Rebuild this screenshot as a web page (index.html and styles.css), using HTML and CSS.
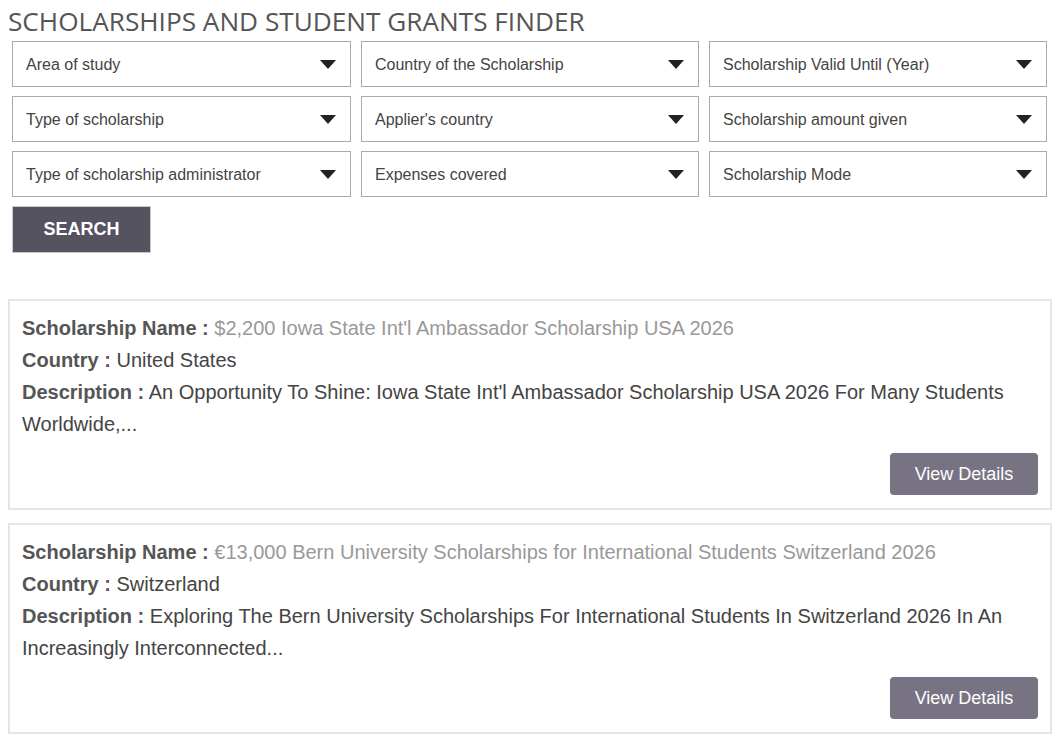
FILE: index.html
```html
<!DOCTYPE html>
<html>
<head>
<meta charset="utf-8">
<link rel="stylesheet" href="styles.css">
</head>
<body>
<h1 class="title">SCHOLARSHIPS AND STUDENT GRANTS FINDER</h1>
<div class="filters">
  <div class="select"><span>Area of study</span><i class="caret"></i></div>
  <div class="select"><span>Country of the Scholarship</span><i class="caret"></i></div>
  <div class="select"><span>Scholarship Valid Until (Year)</span><i class="caret"></i></div>
  <div class="select"><span>Type of scholarship</span><i class="caret"></i></div>
  <div class="select"><span>Applier's country</span><i class="caret"></i></div>
  <div class="select"><span>Scholarship amount given</span><i class="caret"></i></div>
  <div class="select"><span>Type of scholarship administrator</span><i class="caret"></i></div>
  <div class="select"><span>Expenses covered</span><i class="caret"></i></div>
  <div class="select"><span>Scholarship Mode</span><i class="caret"></i></div>
</div>
<button class="search">SEARCH</button>
<div class="results">
  <div class="card">
    <p><b>Scholarship Name :</b> <span class="name">$2,200 Iowa State Int'l Ambassador Scholarship USA 2026</span></p>
    <p><b>Country :</b> United States</p>
    <p><b>Description :</b> An Opportunity To Shine: Iowa State Int'l Ambassador Scholarship USA 2026 For Many Students Worldwide,...</p>
    <div class="actions"><button class="details">View Details</button></div>
  </div>
  <div class="card">
    <p><b>Scholarship Name :</b> <span class="name">€13,000 Bern University Scholarships for International Students Switzerland 2026</span></p>
    <p><b>Country :</b> Switzerland</p>
    <p><b>Description :</b> Exploring The Bern University Scholarships For International Students In Switzerland 2026 In An Increasingly Interconnected...</p>
    <div class="actions"><button class="details">View Details</button></div>
  </div>
</div>
</body>
</html>
```
FILE: styles.css
```css
body {
  margin: 0;
  padding: 0 8px;
  background: #fff;
  font-family: "Liberation Sans", Arial, sans-serif;
  color: #444;
}
.title {
  margin: 0;
  padding: 6px 0 0 0;
  height: 35px;
  font-family: "Open Sans", sans-serif;
  font-weight: 400;
  font-size: 26.2px;
  line-height: 30px;
  color: #555;
}
.filters {
  display: grid;
  grid-template-columns: 339px 338px 338px;
  column-gap: 10px;
  row-gap: 9px;
  padding-left: 4px;
}
.select {
  height: 46px;
  box-sizing: border-box;
  border: 1px solid #aaa;
  display: flex;
  align-items: center;
  justify-content: space-between;
  padding: 2px 13px 0 13px;
  font-size: 16px;
  color: #444;
}
.caret {
  width: 0;
  height: 0;
  border-left: 8px solid transparent;
  border-right: 8px solid transparent;
  border-top: 9px solid #222;
  margin-right: 1px;
  margin-top: -2px;
}
.search {
  display: block;
  margin: 9px 0 0 4px;
  width: 139px;
  height: 47px;
  background: #55535f;
  border: 1px solid #c8c8cc;
  color: #fff;
  font-family: "Liberation Sans", Arial, sans-serif;
  font-weight: 700;
  font-size: 18px;
  padding: 0;
}
.results {
  margin-top: 46px;
  display: flex;
  flex-direction: column;
  gap: 13px;
}
.card {
  border: 2px solid #e6e6e6;
  padding: 11px 12px 13px 12px;
  width: 1044px;
  box-sizing: border-box;
}
.card p {
  margin: 0;
  font-size: 20px;
  line-height: 32px;
  color: #444;
}
.card b {
  color: #555;
}
.card .name {
  color: #999;
}
.actions {
  display: flex;
  justify-content: flex-end;
  margin-top: 13px;
}
.details {
  width: 148px;
  height: 42px;
  background: #777383;
  border: none;
  border-radius: 4px;
  color: #fff;
  font-family: "Liberation Sans", Arial, sans-serif;
  font-size: 18px;
  padding: 0;
}
```
